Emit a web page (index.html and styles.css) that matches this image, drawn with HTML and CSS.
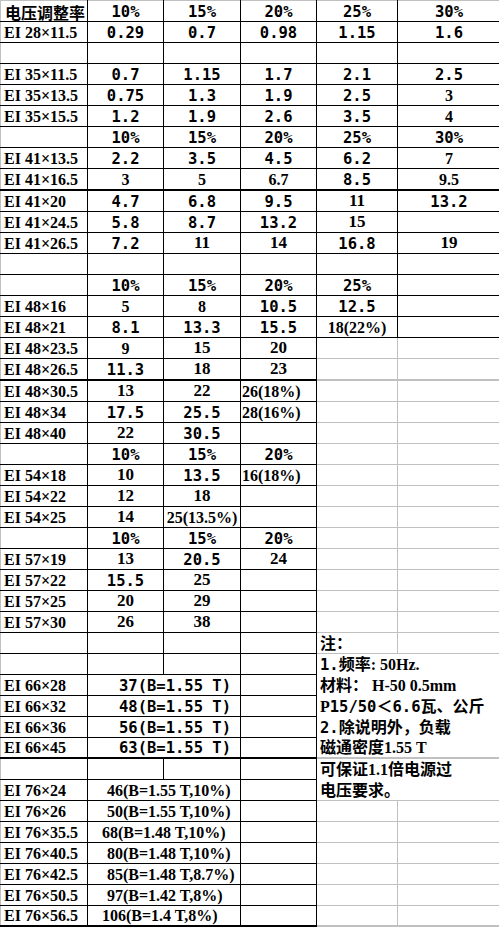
FILE: index.html
```html
<!DOCTYPE html>
<html lang="zh-CN">
<head>
<meta charset="utf-8">
<title>EI 电压调整率</title>
<link rel="stylesheet" href="styles.css">
</head>
<body>
<table class="sheet">
<colgroup><col class="c1"><col class="c2"><col class="c3"><col class="c4"><col class="c5"><col class="c6"></colgroup>
<tbody>
<tr class="top"><td class="h"><div class="fx fh">电压调整率</div></td><td class="m">10%</td><td class="m">15%</td><td class="m">20%</td><td class="m">25%</td><td class="m">30%</td></tr>
<tr><td class="l">EI 28×11.5</td><td class="m">0.29</td><td class="m">0.7</td><td class="m">0.98</td><td class="m">1.15</td><td class="m">1.6</td></tr>
<tr><td></td><td></td><td></td><td></td><td></td><td></td></tr>
<tr><td class="l">EI 35×11.5</td><td class="m">0.7</td><td class="m">1.15</td><td class="m">1.7</td><td class="m">2.1</td><td class="m">2.5</td></tr>
<tr><td class="l">EI 35×13.5</td><td class="m">0.75</td><td class="m">1.3</td><td class="m">1.9</td><td class="m">2.5</td><td>3</td></tr>
<tr><td class="l">EI 35×15.5</td><td class="m">1.2</td><td class="m">1.9</td><td class="m">2.6</td><td class="m">3.5</td><td>4</td></tr>
<tr><td></td><td class="m">10%</td><td class="m">15%</td><td class="m">20%</td><td class="m">25%</td><td class="m">30%</td></tr>
<tr><td class="l">EI 41×13.5</td><td class="m">2.2</td><td class="m">3.5</td><td class="m">4.5</td><td class="m">6.2</td><td>7</td></tr>
<tr><td class="l">EI 41×16.5</td><td>3</td><td>5</td><td>6.7</td><td class="m">8.5</td><td>9.5</td></tr>
<tr class="tk"><td class="l">EI 41×20</td><td class="m">4.7</td><td class="m">6.8</td><td class="m">9.5</td><td class="i">11</td><td class="m">13.2</td></tr>
<tr><td class="l">EI 41×24.5</td><td class="m">5.8</td><td class="m">8.7</td><td class="m">13.2</td><td class="i">15</td><td></td></tr>
<tr><td class="l">EI 41×26.5</td><td class="m">7.2</td><td class="i">11</td><td class="i">14</td><td class="m">16.8</td><td class="i">19</td></tr>
<tr><td></td><td></td><td></td><td></td><td></td><td></td></tr>
<tr><td></td><td class="m">10%</td><td class="m">15%</td><td class="m">20%</td><td class="m">25%</td><td></td></tr>
<tr><td class="l">EI 48×16</td><td>5</td><td>8</td><td class="m">10.5</td><td class="m">12.5</td><td></td></tr>
<tr><td class="l">EI 48×21</td><td class="m">8.1</td><td class="m">13.3</td><td class="m">15.5</td><td>18(22%)</td><td></td></tr>
<tr><td class="l">EI 48×23.5</td><td>9</td><td class="i">15</td><td class="i">20</td><td class="g"></td><td class="g"></td></tr>
<tr><td class="l">EI 48×26.5</td><td class="m">11.3</td><td class="i">18</td><td class="i">23</td><td class="g"></td><td class="g"></td></tr>
<tr class="tk"><td class="l">EI 48×30.5</td><td class="i">13</td><td class="i">22</td><td class="sl">26(18%)</td><td class="g"></td><td class="g"></td></tr>
<tr><td class="l">EI 48×34</td><td class="m">17.5</td><td class="m">25.5</td><td class="sl">28(16%)</td><td class="g"></td><td class="g"></td></tr>
<tr><td class="l">EI 48×40</td><td class="i">22</td><td class="m">30.5</td><td></td><td class="g"></td><td class="g"></td></tr>
<tr><td></td><td class="m">10%</td><td class="m">15%</td><td class="m">20%</td><td class="g"></td><td class="g"></td></tr>
<tr><td class="l">EI 54×18</td><td class="i">10</td><td class="m">13.5</td><td class="sl">16(18%)</td><td class="g"></td><td class="g"></td></tr>
<tr><td class="l">EI 54×22</td><td class="i">12</td><td class="i">18</td><td></td><td class="g"></td><td class="g"></td></tr>
<tr><td class="l">EI 54×25</td><td class="i">14</td><td>25(13.5%)</td><td></td><td class="g"></td><td class="g"></td></tr>
<tr><td></td><td class="m">10%</td><td class="m">15%</td><td class="m">20%</td><td class="g"></td><td class="g"></td></tr>
<tr><td class="l">EI 57×19</td><td class="i">13</td><td class="m">20.5</td><td class="i">24</td><td class="g"></td><td class="g"></td></tr>
<tr><td class="l">EI 57×22</td><td class="m">15.5</td><td class="i">25</td><td></td><td class="g"></td><td class="g"></td></tr>
<tr><td class="l">EI 57×25</td><td class="i">20</td><td class="i">29</td><td></td><td class="g"></td><td class="g"></td></tr>
<tr><td class="l">EI 57×30</td><td class="i">26</td><td class="i">38</td><td></td><td class="g"></td><td class="g"></td></tr>
<tr><td></td><td></td><td></td><td></td><td class="g n"><div class="fx">注：</div></td><td class="g"></td></tr>
<tr><td></td><td></td><td></td><td></td><td class="n nb" colspan="2"><div class="fx"><span class="mi">1.</span>频率: 50Hz.</div></td></tr>
<tr><td class="l">EI 66×28</td><td class="m b1" colspan="2">37(B=1.55 T)</td><td></td><td class="n nb" colspan="2"><div class="fx">材料： H-50 0.5mm</div></td></tr>
<tr><td class="l">EI 66×32</td><td class="m b1" colspan="2">48(B=1.55 T)</td><td></td><td class="n nb" colspan="2"><div class="fx">P<span class="mi">15/50</span>＜<span class="mi">6.6</span>瓦、公斤</div></td></tr>
<tr><td class="l">EI 66×36</td><td class="m b1" colspan="2">56(B=1.55 T)</td><td></td><td class="n nb" colspan="2"><div class="fx"><span class="mi">2.</span>除说明外，负载</div></td></tr>
<tr><td class="l">EI 66×45</td><td class="m b1" colspan="2">63(B=1.55 T)</td><td></td><td class="n nb" colspan="2"><div class="fx">磁通密度1.55 T</div></td></tr>
<tr class="tk"><td></td><td></td><td></td><td></td><td class="n nb ng" colspan="2"><div class="fx">可保证1.1倍电源过</div></td></tr>
<tr><td class="l">EI 76×24</td><td class="b2" colspan="2">46(B=1.55 T,10%)</td><td></td><td class="n nb ne" colspan="2"><div class="fx">电压要求。</div></td></tr>
<tr><td class="l">EI 76×26</td><td class="b2" colspan="2">50(B=1.55 T,10%)</td><td></td><td class="g"></td><td class="g"></td></tr>
<tr><td class="l">EI 76×35.5</td><td class="b2 b3" colspan="2">68(B=1.48 T,10%)</td><td></td><td class="g"></td><td class="g"></td></tr>
<tr><td class="l">EI 76×40.5</td><td class="b2" colspan="2">80(B=1.48 T,10%)</td><td></td><td class="g"></td><td class="g"></td></tr>
<tr><td class="l">EI 76×42.5</td><td class="b2" colspan="2">85(B=1.48 T,8.7%)</td><td></td><td class="g"></td><td class="g"></td></tr>
<tr><td class="l">EI 76×50.5</td><td class="b2" colspan="2">97(B=1.42 T,8%)</td><td></td><td class="g"></td><td class="g"></td></tr>
<tr class="last"><td class="l">EI 76×56.5</td><td class="b2 b3" colspan="2">106(B=1.4 T,8%)</td><td></td><td class="g"></td><td class="g"></td></tr>
</tbody>
</table>
</body>
</html>
```

FILE: styles.css
```css
html, body {
  margin: 0;
  padding: 0;
  background: #fff;
}

.sheet {
  border-collapse: collapse;
  table-layout: fixed;
  width: 500px;
  color: #000;
}

.c1 { width: 87px; }
.c2 { width: 76px; }
.c3 { width: 77px; }
.c4 { width: 76px; }
.c5 { width: 81px; }
.c6 { width: 103px; }

.sheet tr { height: 21px; }

.sheet td {
  border: 1px solid #000;
  padding: 0 1px;
  line-height: 18px;
  vertical-align: bottom;
  white-space: nowrap;
  overflow: visible;
  text-align: center;
  font: bold 16px "Liberation Serif", "Noto Sans CJK SC", serif;
}

.sheet td.i { font-size: 17px; }

.fx {
  height: 23px;
  margin-top: -5px;
  overflow: visible;
}

.fx.fh {
  height: 21px;
  margin-top: -3px;
}

.sheet td:first-child { border-left-color: #c0c0c0; }
.sheet .top td { border-top-color: #c0c0c0; }

.sheet .tk td { border-top: 2px solid #000; }
.sheet .last td { border-bottom: 2px solid #000; }

.sheet td.g { border-color: #c0c0c0; }
.sheet .tk td.g { border-top: 2px solid #c0c0c0; }

.sheet td.m,
.mi {
  font-family: "DejaVu Sans Mono", monospace;
  font-size: 15.5px;
}

.sheet td.h {
  text-align: left;
  padding-left: 4px;
  font-family: "Noto Sans CJK SC", sans-serif;
}

.sheet td.l {
  text-align: left;
  padding-left: 3px;
}

.sheet td.sl {
  text-align: left;
  padding-left: 1px;
}

.sheet td.b1 {
  text-align: left;
  padding-left: 31px;
}

.sheet td.b2 {
  text-align: left;
  padding-left: 19px;
}

.sheet td.b3 { padding-left: 14px; }

.sheet td.n {
  text-align: left;
  padding-left: 3px;
}

.sheet td.nb {
  border-top: none;
  border-bottom: none;
  border-right-color: #c0c0c0;
}

.sheet .tk td.ng { border-top: 2px solid #c0c0c0; }
.sheet td.ne { border-bottom: 1px solid #c0c0c0; }
```
